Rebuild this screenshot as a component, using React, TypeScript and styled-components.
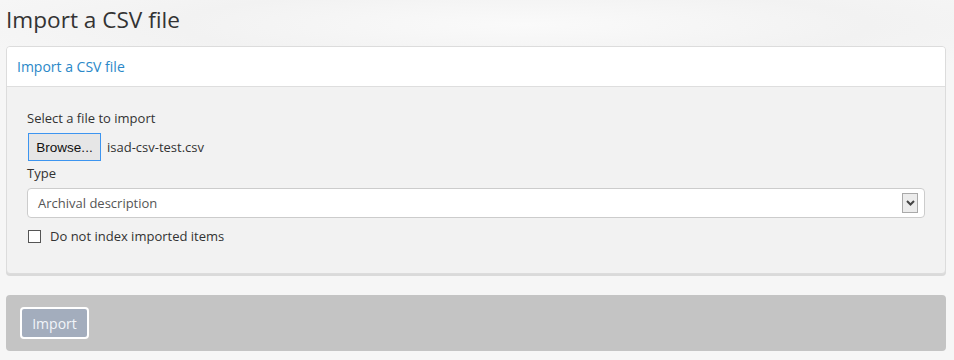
import React from "react";
import styled, { createGlobalStyle } from "styled-components";

const Global = createGlobalStyle`
  html, body { margin: 0; padding: 0; }
  body {
    background: #f6f6f6;
    font-family: "Open Sans", "DejaVu Sans", sans-serif;
    color: #333;
  }
`;

const Page = styled.div`
  min-height: 360px;
  background: radial-gradient(ellipse 60% 60px at 55% 25px, #fafafa 0%, #f2f2f2 60%, #f6f6f6 100%);
  padding: 0 8px 0 6px;
  box-sizing: border-box;
`;

const Title = styled.h1`
  margin: 0;
  padding: 5px 0 0 0;
  font-size: 22.6px;
  font-weight: 400;
  line-height: 30px;
  color: #333;
`;

const Panel = styled.section`
  margin-top: 11px;
  border: 1px solid #dcdcdc;
  border-radius: 4px;
  background: #f2f2f2;
  box-shadow: 0 2px 0 #dadada;
  overflow: hidden;
`;

const PanelHeader = styled.div`
  height: 39px;
  display: flex;
  align-items: center;
  padding: 0 10px;
  background: #fff;
  border-bottom: 1px solid #dedede;
  color: #2a88c8;
  font-size: 14px;
`;

const PanelBody = styled.div`
  padding: 22px 20px 28px 20px;
  display: flex;
  flex-direction: column;
`;

const Label = styled.div`
  font-size: 13px;
  line-height: 18px;
  color: #333;
`;

const FileRow = styled.div`
  display: flex;
  align-items: center;
  gap: 6px;
  margin: 6px 0 3px;
`;

const BrowseButton = styled.button`
  margin-left: 1px;
  width: 73px;
  height: 28px;
  padding: 0;
  background: #e6e6e6;
  border: 1px solid #3d95f0;
  border-radius: 0;
  font-family: "Liberation Sans", Arial, sans-serif;
  font-size: 13.5px;
  color: #111;
`;

const FileName = styled.span`
  font-size: 13px;
  color: #333;
`;

const SelectBox = styled.div`
  margin-top: 6px;
  height: 28px;
  border: 1px solid #ccc;
  border-radius: 4px;
  background: #fff;
  display: flex;
  align-items: center;
  justify-content: space-between;
  padding: 0 6px 0 10px;
  font-size: 13px;
  color: #555;
`;

const ArrowBox = styled.span`
  width: 14px;
  height: 18px;
  border: 1px solid #a9a9a9;
  background: #ececec;
  display: flex;
  align-items: center;
  justify-content: center;
`;

const CheckRow = styled.label`
  display: flex;
  align-items: center;
  gap: 9px;
  margin-top: 9px;
  font-size: 13px;
  color: #333;
`;

const CheckBox = styled.span`
  width: 11px;
  height: 11px;
  border: 1px solid #555;
  background: #fff;
  margin-left: 1px;
`;

const Actions = styled.div`
  margin-top: 21px;
  height: 56px;
  background: #c4c4c4;
  border-radius: 4px;
  display: flex;
  align-items: center;
  padding: 0 14px;
`;

const ImportButton = styled.button`
  width: 69px;
  height: 32px;
  background: #a3adbd;
  border: 2px solid #fff;
  border-radius: 4px;
  color: #f2f5f9;
  font-family: "Open Sans", sans-serif;
  font-size: 14px;
  padding: 0;
`;

export default function App() {
  return (
    <>
      <Global />
      <Page>
        <Title>Import a CSV file</Title>
        <Panel>
          <PanelHeader>Import a CSV file</PanelHeader>
          <PanelBody>
            <Label>Select a file to import</Label>
            <FileRow>
              <BrowseButton>Browse...</BrowseButton>
              <FileName>isad-csv-test.csv</FileName>
            </FileRow>
            <Label>Type</Label>
            <SelectBox>
              <span>Archival description</span>
              <ArrowBox>
                <svg width="9" height="6" viewBox="0 0 9 6">
                  <path d="M1 1 L4.5 4.5 L8 1" fill="none" stroke="#444" strokeWidth="2" />
                </svg>
              </ArrowBox>
            </SelectBox>
            <CheckRow>
              <CheckBox />
              Do not index imported items
            </CheckRow>
          </PanelBody>
        </Panel>
        <Actions>
          <ImportButton>Import</ImportButton>
        </Actions>
      </Page>
    </>
  );
}
